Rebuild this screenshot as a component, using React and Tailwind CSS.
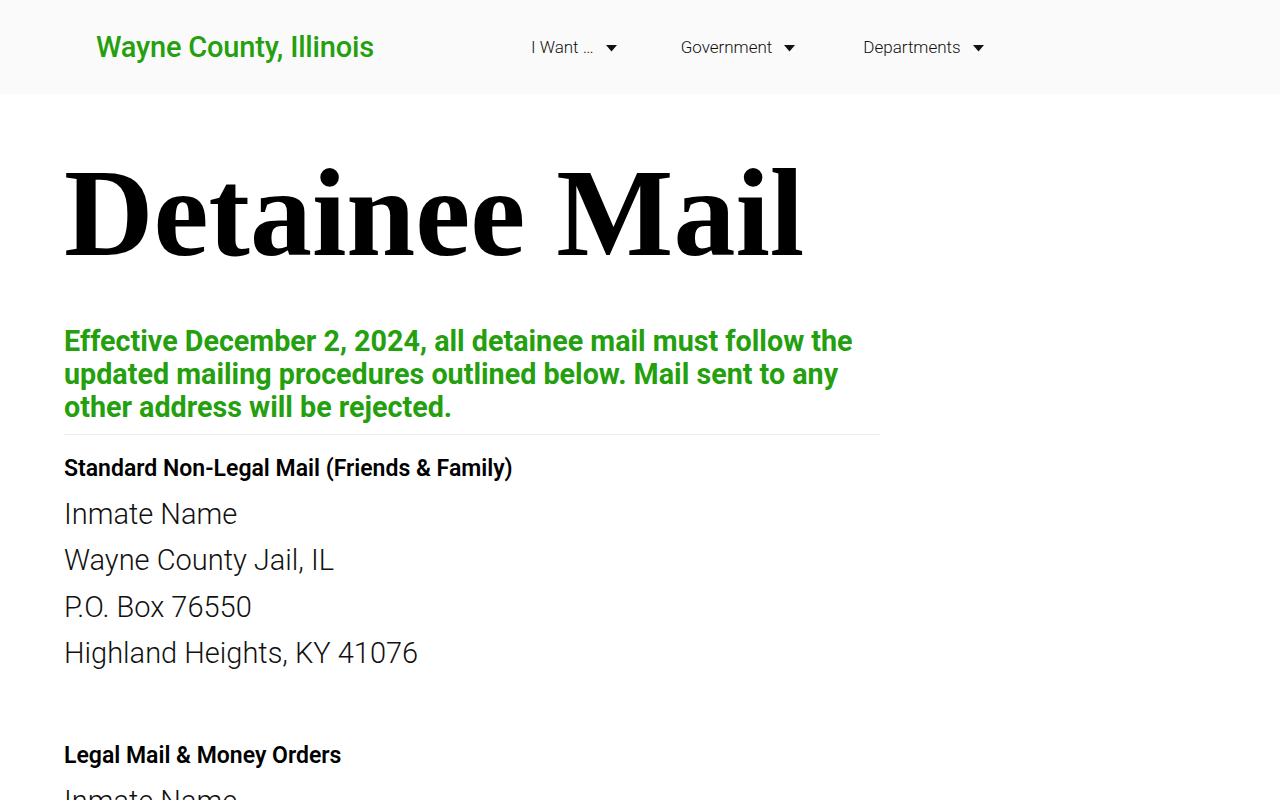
import React from "react";

function Caret() {
  return (
    <svg width="11" height="7" viewBox="0 0 11 7" className="ml-[12px] mt-[1px]">
      <path d="M0 0 L11 0 L5.5 6.5 Z" fill="#111" />
    </svg>
  );
}

export default function App() {
  const roboto = { fontFamily: "Roboto, 'Liberation Sans', sans-serif" };
  return (
    <div className="h-[800px] overflow-hidden bg-white" style={roboto}>
      <header className="h-[94px] bg-[#fafafa] flex items-center pt-[2px]">
        <div className="w-[499px] pl-[96px] text-[29px] font-medium text-[#24a00e] tracking-[-0.2px]">
          Wayne County, Illinois
        </div>
        <nav className="flex items-center text-[17px] font-light text-[#111]">
          <div className="flex items-center px-[32px]">I Want …<Caret /></div>
          <div className="flex items-center px-[32px] ml-[0px]">Government<Caret /></div>
          <div className="flex items-center px-[32px] ml-[4px]">Departments<Caret /></div>
        </nav>
      </header>
      <main className="pl-[64px] w-[880px]">
        <h1
          className="text-[124px] font-bold leading-none text-black mt-[58px]"
          style={{ fontFamily: "'Liberation Serif', serif" }}
        >
          Detainee Mail
        </h1>
        <p className="mt-[49px] text-[28.7px] font-bold leading-[33px] text-[#24a00e]">
          Effective December 2, 2024, all detainee mail must follow the updated mailing procedures outlined below. Mail sent to any other address will be rejected.
        </p>
        <div className="mt-[10px] border-t border-[#ececec]" />
        <h3 className="mt-[20px] text-[23px] font-semibold leading-[28px] text-black">
          Standard Non-Legal Mail (Friends &amp; Family)
        </h3>
        <div className="mt-[8px] text-[29px] font-light leading-[46.3px] text-[#111]">
          <div>Inmate Name</div>
          <div>Wayne County Jail, IL</div>
          <div>P.O. Box 76550</div>
          <div>Highland Heights, KY 41076</div>
        </div>
        <h3 className="mt-[66px] text-[23px] font-semibold leading-[28px] text-black">
          Legal Mail &amp; Money Orders
        </h3>
        <div className="mt-[8px] text-[29px] font-light leading-[46.3px] text-[#111]">
          <div>Inmate Name</div>
          <div>Wayne County Jail, IL</div>
        </div>
      </main>
    </div>
  );
}
